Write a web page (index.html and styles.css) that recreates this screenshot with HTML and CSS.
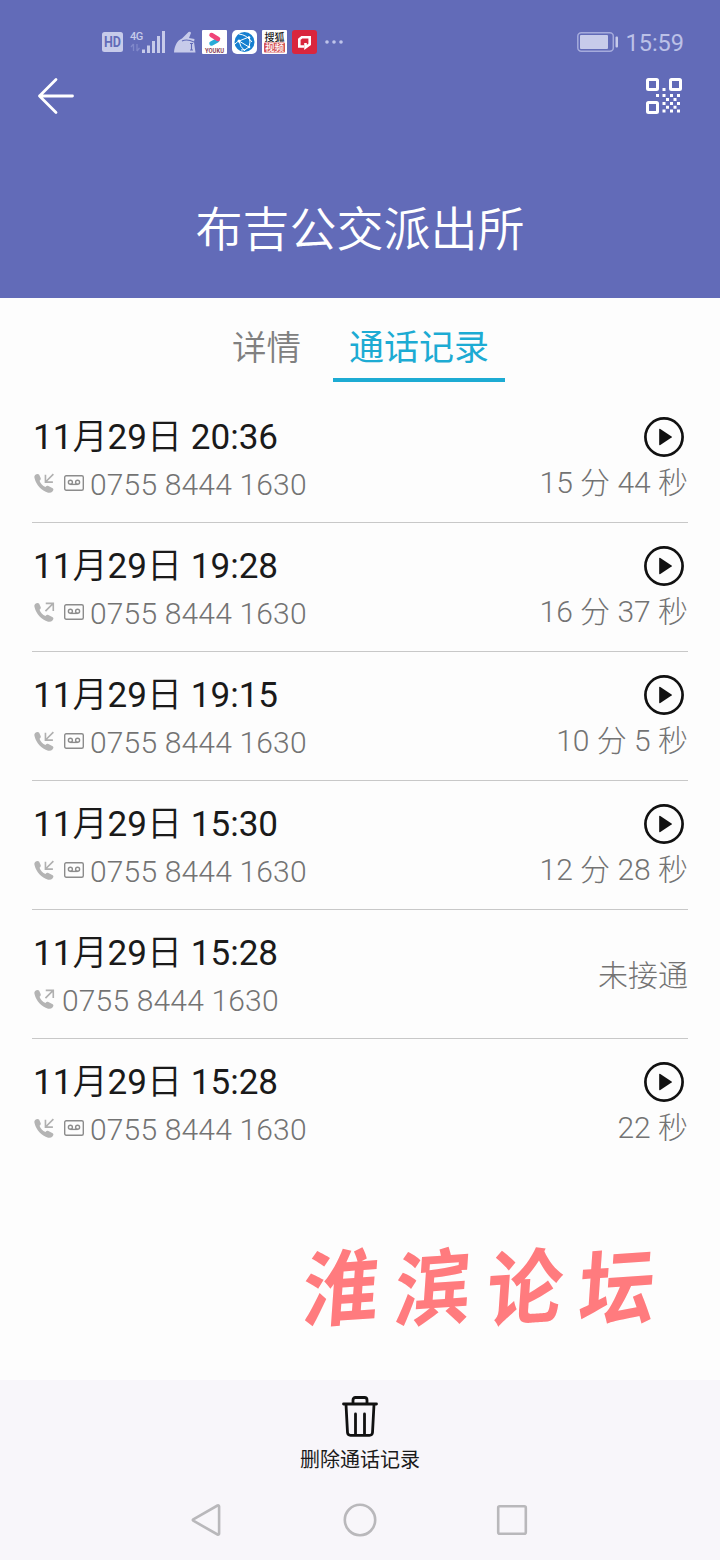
FILE: index.html
```html
<!DOCTYPE html>
<html lang="zh-CN">
<head>
    <meta charset="UTF-8">
    <meta name="viewport" content="width=device-width, initial-scale=1.0">
    <title>通话记录</title>
    <link rel="stylesheet" href="styles.css">
</head>
<body>
    <!-- Shared icons -->
    <svg class="icon-defs" width="0" height="0">
        <symbol id="handset" viewBox="0 0 22 22">
            <path fill="#b4b4b4" d="M1.2 2.2C2.5.8 4.3.5 5.3 1.7L7 5.2c.5 1.2-.2 2-1.2 3 1 3 3.3 5.300 6.200 6.500 1-1.200 1.900-1.700 3.100-1.100l4.500 2.400c1.300.900.800 2.400-.500 3.700-1 1-2.500 1.300-4.300.900C7.800 18.600 2.300 12.700.6 5.600.2 4.100.4 3 1.200 2.200z"/>
        </symbol>
        <symbol id="call-in" viewBox="0 0 22 22">
            <use href="#handset"/>
            <path fill="none" stroke="#b0b0b0" stroke-width="1.700" d="M20.300 1.200L12.600 8.900M12 1.800V9.500H19.800"/>
        </symbol>
        <symbol id="call-out" viewBox="0 0 22 22">
            <use href="#handset"/>
            <path fill="none" stroke="#b0b0b0" stroke-width="1.700" d="M12 9.600L19.600 2M12.300 1.500H20.200V9.400"/>
        </symbol>
        <symbol id="voicemail" viewBox="0 0 20 16">
            <g fill="none" stroke="#8c8c8c" stroke-width="1.400">
                <rect x=".7" y=".7" width="18.600" height="14.600" rx="1.500"/>
                <circle cx="6.400" cy="7.300" r="2"/>
                <circle cx="13.600" cy="7.300" r="2"/>
                <path d="M6.400 9.400H13.600"/>
            </g>
        </symbol>
        <symbol id="play" viewBox="0 0 40 40">
            <circle cx="20" cy="20" r="18.600" fill="none" stroke="#111" stroke-width="2.700"/>
            <path fill="#111" d="M15.200 12.600Q15.200 11.400 16.300 12L27.600 19.400Q28.400 20 27.600 20.600L16.300 28Q15.200 28.600 15.200 27.400z"/>
        </symbol>
    </svg>

    <header class="header">
        <div class="status-bar">
            <div class="status-icons">
                <svg class="hd" width="21" height="20" viewBox="0 0 21 20">
                    <rect width="21" height="20" rx="2.500" fill="#c7cbea"/>
                    <text x="2" y="15" textLength="17" lengthAdjust="spacingAndGlyphs" font-size="14" font-weight="700" fill="#626bb8">HD</text>
                </svg>
                <div class="signal">
                    <div class="network">
                        <span>4G</span>
                        <svg width="11" height="9" viewBox="0 0 11 9">
                            <path stroke="#8088ca" stroke-width="1.300" fill="none" d="M3.500 1v7M1 4l2.500-3M7 1v7M9.500 5L7 8"/>
                        </svg>
                    </div>
                    <svg width="24" height="24" viewBox="0 0 24 24">
                        <path fill="#c7cbea" d="M0 19.500h3V23H0zM5 15.500h3V23H5zM10 11h3v12h-3zM15 6h3v17h-3zM20 1h3v22h-3z"/>
                    </svg>
                </div>
                <svg class="cleaner" width="23" height="22" viewBox="0 0 23 22">
                    <path fill="#c7cbea" d="M0 21.500C.5 15 3 9.500 8 7.500L14.500 1Q16.500 0 17 2L15 7 20.500 8 20 11 21.500 21.500z"/>
                    <path fill="none" stroke="#626bb8" stroke-width="1.100" d="M8 10Q13 7.500 20 11M16 12.500h3M17.500 12.500V19M16 19h3"/>
                </svg>
                <svg width="25" height="24" viewBox="0 0 25 24">
                    <rect width="25" height="24" rx="1" fill="#fff"/>
                    <path fill="none" stroke="#28abd8" stroke-width="4.500" stroke-linecap="round" d="M9.500 13.500L15 10.500"/>
                    <path fill="none" stroke="#f04478" stroke-width="4.500" stroke-linecap="round" d="M9.500 5L16 9"/>
                    <text x="3" y="22.500" font-size="7" font-weight="700" textLength="19" lengthAdjust="spacingAndGlyphs" fill="#8b3f58">YOUKU</text>
                </svg>
                <svg width="25" height="24" viewBox="0 0 25 24">
                    <rect width="25" height="24" rx="5" fill="#fff"/>
                    <circle cx="12.500" cy="12" r="10" fill="#167fd0"/>
                    <path fill="none" stroke="#fff" stroke-width="1" d="M7 4Q15 5 20 12M7 11L17 7M7 11L17 17M17 7Q19 12 17 17M3 14Q6 11 7 11M13 21Q8 17 7 11M17 17Q13 21 9 20"/>
                    <g fill="#fff"><circle cx="7" cy="11" r="1.500"/><circle cx="17" cy="7.500" r="1.300"/><circle cx="17" cy="17" r="1.300"/></g>
                </svg>
                <svg width="25" height="24" viewBox="0 0 25 24">
                    <rect width="25" height="24" rx="1" fill="#fff"/>
                    <text x="2.500" y="10.500" font-size="10" font-weight="500" fill="#222">搜狐</text>
                    <rect x="2" y="12.500" width="21" height="10" rx="1" fill="#d45559"/>
                    <text x="3" y="21.200" font-size="9.500" font-weight="500" fill="#fff">视频</text>
                </svg>
                <svg width="25" height="24" viewBox="0 0 25 24">
                    <rect width="25" height="24" rx="3" fill="#d9263d"/>
                    <path fill="none" stroke="#fff" stroke-width="2.600" d="M12 16.500H7.300V9.300L9.800 7.300H17.700V14.300L13.500 17.500V13"/>
                </svg>
                <svg class="more" width="18" height="4" viewBox="0 0 18 4">
                    <g fill="#bfc4ea"><circle cx="2" cy="2" r="1.800"/><circle cx="9" cy="2" r="1.800"/><circle cx="16" cy="2" r="1.800"/></g>
                </svg>
            </div>
            <div class="status-right">
                <svg width="42" height="20" viewBox="0 0 42 20">
                    <rect x=".8" y=".8" width="35.500" height="18.400" rx="3.500" fill="none" stroke="#a5abdc" stroke-width="1.500"/>
                    <rect x="3" y="3" width="28" height="14" rx="1" fill="#c7cbea"/>
                    <rect x="38.500" y="4.500" width="2.500" height="11" rx="1" fill="#c7cbea"/>
                </svg>
                <span class="clock">15:59</span>
            </div>
        </div>
        <div class="toolbar">
            <svg width="38" height="38" viewBox="0 0 38 38">
                <path fill="none" stroke="#fff" stroke-width="2.800" stroke-linecap="round" stroke-linejoin="round" d="M19 2.500L2.500 19 19 35.500M2.500 19H35.500"/>
            </svg>
            <svg width="36" height="36" viewBox="0 0 36 36" fill="#fff">
                <g fill="none" stroke="#fff" stroke-width="3">
                    <rect x="1.500" y="1.500" width="10" height="10" rx="1"/>
                    <rect x="24.500" y="1.500" width="10" height="10" rx="1"/>
                    <rect x="1.500" y="24.500" width="10" height="10" rx="1"/>
                </g>
                <path d="M16.500 10h3v3h-3zM10 16h3v3h-3zM16.500 16h3v3h-3zM24 16h3v3h-3zM31 16h3v3h-3zM20 20h3v3h-3zM27.500 20h3v3h-3zM16.500 24h3v3h-3zM24 24h3v3h-3zM31 24h3v3h-3zM20 27.700h3v3h-3zM27.500 27.700h3v3h-3zM16.500 31.500h3v3h-3zM24 31.500h3v3h-3zM31 31.500h3v3h-3z"/>
            </svg>
        </div>
        <h1>布吉公交派出所</h1>
    </header>

    <nav class="tabs">
        <a class="tab">详情</a>
        <a class="tab active">通话记录</a>
    </nav>

    <main class="call-list">
        <div class="call-item">
            <div class="call-info">
                <div class="date">11月29日 20:36</div>
                <div class="number"><svg class="call-icon"><use href="#call-in"/></svg><svg class="voicemail"><use href="#voicemail"/></svg>0755 8444 1630</div>
            </div>
            <div class="call-side">
                <svg class="play"><use href="#play"/></svg>
                <div class="duration">15 分 44 秒</div>
            </div>
        </div>
        <div class="call-item">
            <div class="call-info">
                <div class="date">11月29日 19:28</div>
                <div class="number"><svg class="call-icon"><use href="#call-out"/></svg><svg class="voicemail"><use href="#voicemail"/></svg>0755 8444 1630</div>
            </div>
            <div class="call-side">
                <svg class="play"><use href="#play"/></svg>
                <div class="duration">16 分 37 秒</div>
            </div>
        </div>
        <div class="call-item">
            <div class="call-info">
                <div class="date">11月29日 19:15</div>
                <div class="number"><svg class="call-icon"><use href="#call-in"/></svg><svg class="voicemail"><use href="#voicemail"/></svg>0755 8444 1630</div>
            </div>
            <div class="call-side">
                <svg class="play"><use href="#play"/></svg>
                <div class="duration">10 分 5 秒</div>
            </div>
        </div>
        <div class="call-item">
            <div class="call-info">
                <div class="date">11月29日 15:30</div>
                <div class="number"><svg class="call-icon"><use href="#call-in"/></svg><svg class="voicemail"><use href="#voicemail"/></svg>0755 8444 1630</div>
            </div>
            <div class="call-side">
                <svg class="play"><use href="#play"/></svg>
                <div class="duration">12 分 28 秒</div>
            </div>
        </div>
        <div class="call-item">
            <div class="call-info">
                <div class="date">11月29日 15:28</div>
                <div class="number"><svg class="call-icon"><use href="#call-out"/></svg>0755 8444 1630</div>
            </div>
            <div class="call-side missed">
                <div class="duration">未接通</div>
            </div>
        </div>
        <div class="call-item">
            <div class="call-info">
                <div class="date">11月29日 15:28</div>
                <div class="number"><svg class="call-icon"><use href="#call-in"/></svg><svg class="voicemail"><use href="#voicemail"/></svg>0755 8444 1630</div>
            </div>
            <div class="call-side">
                <svg class="play"><use href="#play"/></svg>
                <div class="duration">22 秒</div>
            </div>
        </div>
    </main>

    <div class="watermark"><span>淮</span><span>滨</span><span>论</span><span>坛</span></div>

    <footer class="bottom">
        <div class="delete">
            <svg width="36" height="41" viewBox="0 0 36 41">
                <g fill="none" stroke="#111" stroke-width="2.800" stroke-linecap="round" stroke-linejoin="round">
                    <path d="M1.500 8H34.500M11 7.500V4Q11 1.500 13.500 1.500H22.500Q25 1.500 25 4V7.500M4 8.500L5.500 36.500Q5.700 39.300 8.500 39.300H27.500Q30.300 39.300 30.500 36.500L32 8.500M13.500 18V38.500M22.500 18V38.500"/>
                </g>
            </svg>
            <span>删除通话记录</span>
        </div>
        <div class="nav-keys">
            <svg width="34" height="34" viewBox="0 0 34 34"><path d="M2.300 16.300L26.500 2.500Q28.100 1.900 28.100 3.600V30.400Q28.100 32.100 26.500 31.500L2.300 17.700Q1.300 17 2.300 16.300z"/></svg>
            <svg width="34" height="34" viewBox="0 0 34 34"><circle cx="17" cy="17" r="15.200"/></svg>
            <svg width="34" height="34" viewBox="0 0 34 34"><rect x="3.200" y="3.200" width="27.600" height="27.600" rx="1.500"/></svg>
        </div>
    </footer>
</body>
</html>
```

FILE: styles.css
```css
* {
    box-sizing: border-box;
}

body {
    margin: 0;
    width: 720px;
    height: 1560px;
    display: flex;
    flex-direction: column;
    overflow: hidden;
    font-family: Roboto, "Noto Sans CJK SC", sans-serif;
    background-color: #fdfdfd;
    color: #1a1a1a;
}

svg {
    display: block;
    flex-shrink: 0;
}

.icon-defs {
    position: absolute;
}

.header {
    height: 298px;
    padding-top: 28px;
    background-color: #626bb8;
    color: #fff;
}

.status-bar {
    height: 28px;
    padding: 0 36px 0 102px;
    display: flex;
    justify-content: space-between;
    align-items: center;
}

.status-icons {
    display: flex;
    align-items: center;
    gap: 5px;
}

.signal {
    width: 36px;
    margin-left: 2px;
    display: flex;
}

.network {
    width: 12px;
    font-size: 11px;
    line-height: 13px;
    font-weight: 500;
    letter-spacing: -0.5px;
    white-space: nowrap;
    color: #c7cbea;
}

.network span {
    display: block;
}

.cleaner {
    margin-left: 3px;
}

.more {
    margin-left: 3px;
}

.status-right {
    display: flex;
    align-items: center;
    gap: 6px;
}

.clock {
    padding-top: 1px;
    font-size: 23.5px;
    line-height: 28px;
    color: #bcc1e7;
}

.toolbar {
    height: 80px;
    padding: 0 38px 0 37px;
    display: flex;
    justify-content: space-between;
    align-items: center;
}

h1 {
    margin: 55px 0 0;
    text-align: center;
    font-family: "Noto Sans CJK SC", sans-serif;
    font-size: 47px;
    line-height: 70px;
    font-weight: 350;
}

.tabs {
    height: 96px;
    padding: 0 215px;
    display: flex;
    align-items: flex-start;
}

.tab {
    height: 84px;
    padding: 25px 17px 0;
    font-size: 34.5px;
    line-height: 50px;
    font-weight: 350;
    white-space: nowrap;
    color: #808080;
}

.tab.active {
    width: 172px;
    margin-left: 15px;
    padding: 26px 16px 0;
    border-bottom: 4px solid #1dabd3;
    font-size: 35px;
    font-weight: 400;
    color: #1dabd3;
}

.call-list {
    padding: 0 32px;
}

.call-item {
    height: 129px;
    display: flex;
    justify-content: space-between;
    border-bottom: 1px solid #c8c8c8;
}

.call-item:last-child {
    border-bottom: none;
}

.call-info {
    padding-top: 18px;
}

.date {
    height: 50px;
    padding-left: 1px;
    font-family: Roboto, "Noto Sans CJK SC DemiLight", "Noto Sans CJK SC", sans-serif;
    font-size: 35.1px;
    line-height: 50px;
}

.number {
    height: 46px;
    padding-left: 2px;
    display: flex;
    align-items: center;
    font-size: 30px;
    line-height: 46px;
    font-weight: 300;
    letter-spacing: 0.17px;
    color: #737373;
}

.call-icon {
    width: 21px;
    height: 21px;
    margin: 0 7px 3px 0;
}

.voicemail {
    width: 20px;
    height: 16px;
    margin: 0 6px 4px 2px;
}

.call-side {
    padding-top: 23px;
    display: flex;
    flex-direction: column;
    align-items: flex-end;
}

.call-side.missed {
    padding-top: 0;
    justify-content: center;
}

.play {
    width: 40px;
    height: 40px;
    margin-right: 4px;
}

.duration {
    margin-top: 4px;
    font-size: 30px;
    line-height: 44px;
    font-weight: 300;
    color: #737373;
}

.watermark {
    height: 110px;
    margin-top: 66px;
    padding-left: 303px;
    display: flex;
    gap: 16px;
    font-family: "Noto Sans CJK SC", sans-serif;
    font-size: 76px;
    line-height: 98px;
    font-weight: 700;
    color: #ff7b7e;
}

.watermark span {
    transform: rotate(-4deg) skewX(-8deg) scaleY(1.08);
}

.bottom {
    height: 180px;
    margin-top: auto;
    padding-top: 16px;
    background-color: #f8f6fa;
}

.delete {
    display: flex;
    flex-direction: column;
    align-items: center;
    gap: 9px;
    font-size: 20px;
    line-height: 28px;
}

.nav-keys {
    margin-top: 29px;
    display: flex;
    justify-content: center;
    gap: 118px;
    fill: none;
    stroke: #b9b8bb;
    stroke-width: 2.6;
}
```
